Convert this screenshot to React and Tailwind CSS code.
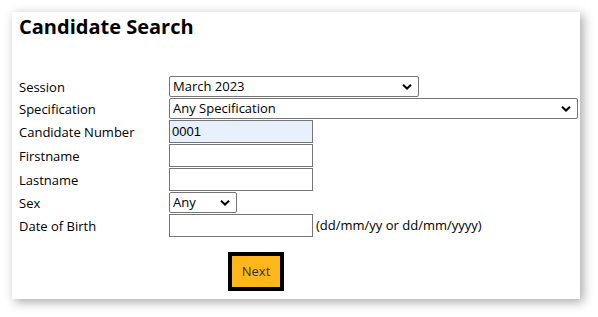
import React from "react";

const Chevron = () => (
  <svg width="10" height="7" viewBox="0 0 10 7" className="absolute right-[6px] top-1/2 -translate-y-1/2 pointer-events-none">
    <path d="M1 1.2 L5 5 L9 1.2" fill="none" stroke="#000" strokeWidth="2" />
  </svg>
);

function Select({ value, width }) {
  return (
    <div className={`relative h-[21px] border border-[#767676] rounded-[2px] bg-white ${width}`}>
      <div className="pl-[3px] leading-[19px] text-[13px] text-black">{value}</div>
      <Chevron />
    </div>
  );
}

function Input({ value, filled }) {
  return (
    <div
      className={`h-[23px] w-[144px] border border-[#767676] ${filled ? "bg-[#e8f0fe]" : "bg-white"} pl-[2px] leading-[21px] text-[13px] text-black`}
      style={{ fontFamily: '"Liberation Sans", Arial, sans-serif' }}
    >
      {value}
    </div>
  );
}

function Row({ label, children }) {
  return (
    <div className="flex items-center">
      <div className="w-[150px] text-[13px] text-black leading-[18px]">{label}</div>
      {children}
    </div>
  );
}

export default function App() {
  return (
    <div className="bg-white w-[598px] h-[317px] pt-[12px] pl-[12px]" style={{ fontFamily: '"Open Sans", sans-serif' }}>
      <div className="w-[568px] h-[287px] bg-white shadow-[3px_3px_10px_rgba(0,0,0,0.35)] pl-[7px]">
        <h1 className="text-[20px] font-bold leading-[28px] pt-[1px] text-black">Candidate Search</h1>
        <div className="mt-[35px] flex flex-col gap-[1px]">
          <Row label="Session">
            <Select value="March 2023" width="w-[250px]" />
          </Row>
          <Row label="Specification">
            <Select value="Any Specification" width="w-[409px]" />
          </Row>
          <Row label="Candidate Number">
            <Input value="0001" filled />
          </Row>
          <Row label="Firstname">
            <Input value="" />
          </Row>
          <Row label="Lastname">
            <Input value="" />
          </Row>
          <Row label="Sex">
            <Select value="Any" width="w-[68px]" />
          </Row>
          <Row label="Date of Birth">
            <Input value="" />
            <span className="ml-[3px] text-[13px] text-black">(dd/mm/yy or dd/mm/yyyy)</span>
          </Row>
        </div>
        <div className="mt-[15px] ml-[209px] w-[56px] h-[39px] border-[4px] border-black bg-[#fdb71a] flex items-center justify-center text-[13px] text-[#333]">
          Next
        </div>
      </div>
    </div>
  );
}
